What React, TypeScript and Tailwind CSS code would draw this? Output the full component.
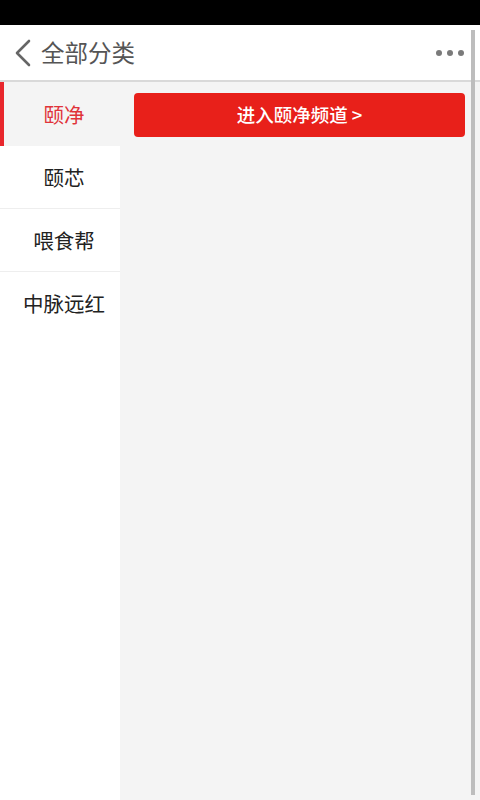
import React from "react";

const items = ["颐净", "颐芯", "喂食帮", "中脉远红"];

export default function App() {
  return (
    <div
      className="relative flex h-[800px] w-[480px] flex-col overflow-hidden bg-[#f4f4f4]"
      style={{ fontFamily: '"Noto Sans CJK SC", "Noto Sans", sans-serif' }}
    >
      <div className="h-[25px] w-full shrink-0 bg-black" />
      <div className="flex h-[57px] shrink-0 items-center border-b-2 border-[#d9d9d9] bg-white">
        <svg width="20" height="28" viewBox="0 0 20 28" className="ml-[13px]">
          <path d="M16 2 L4 14 L16 26" fill="none" stroke="#666" strokeWidth="2.6" strokeLinecap="round" strokeLinejoin="round" />
        </svg>
        <span className="ml-[8px] text-[23.5px] leading-none text-[#555]">全部分类</span>
        <div className="ml-auto mr-[16px] flex gap-[5px]">
          <span className="h-[6px] w-[6px] rounded-full bg-[#7a7a7a]" />
          <span className="h-[6px] w-[6px] rounded-full bg-[#7a7a7a]" />
          <span className="h-[6px] w-[6px] rounded-full bg-[#7a7a7a]" />
        </div>
      </div>
      <div className="flex flex-1">
        <div className="flex w-[120px] flex-col bg-white">
          {items.map((t, i) =>
            i === 0 ? (
              <div key={t} className="flex h-[64px] items-center justify-center border-l-[4px] border-[#e8262c] bg-[#f4f4f4] pl-[4px] text-[20.5px] text-[#e0333a]">
                {t}
              </div>
            ) : (
              <div
                key={t}
                className={`flex h-[63px] items-center justify-center pl-[8px] text-[20.5px] text-[#222] ${i < items.length - 1 ? "border-b border-[#eeeeee]" : ""}`}
              >
                {t}
              </div>
            )
          )}
        </div>
        <div className="flex-1 pl-[14px] pr-[15px] pt-[11px]">
          <div className="flex h-[44px] items-center justify-center rounded-[4px] bg-[#e8201a] text-[18.5px] font-medium text-white">
            进入颐净频道 &gt;
          </div>
        </div>
      </div>
      <div className="absolute right-[5px] top-[30px] h-[765px] w-[4px] bg-[#bdbdbd]" />
    </div>
  );
}
